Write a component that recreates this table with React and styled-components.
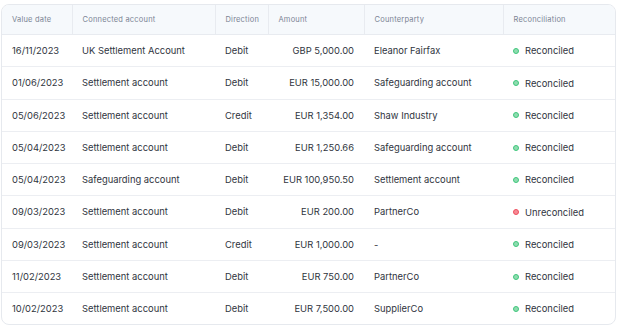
import React from 'react'
import styled, { createGlobalStyle } from 'styled-components'

const rows = [
  ['16/11/2023', 'UK Settlement Account', 'Debit', 'GBP 5,000.00', 'Eleanor Fairfax', true],
  ['01/06/2023', 'Settlement account', 'Debit', 'EUR 15,000.00', 'Safeguarding account', true],
  ['05/06/2023', 'Settlement account', 'Credit', 'EUR 1,354.00', 'Shaw Industry', true],
  ['05/04/2023', 'Settlement account', 'Debit', 'EUR 1,250.66', 'Safeguarding account', true],
  ['05/04/2023', 'Safeguarding account', 'Debit', 'EUR 100,950.50', 'Settlement account', true],
  ['09/03/2023', 'Settlement account', 'Debit', 'EUR 200.00', 'PartnerCo', false],
  ['09/03/2023', 'Settlement account', 'Credit', 'EUR 1,000.00', '-', true],
  ['11/02/2023', 'Settlement account', 'Debit', 'EUR 750.00', 'PartnerCo', true],
  ['10/02/2023', 'Settlement account', 'Debit', 'EUR 7,500.00', 'SupplierCo', true],
]

const columns = ['Value date', 'Connected account', 'Direction', 'Amount', 'Counterparty', 'Reconciliation']
const widths = [70, 143, 53, 96, 139, 114]

function App() {
  return (
    <>
      <GlobalStyle />
      <Page>
        <Card>
          <Table>
            <colgroup>
              {widths.map((w, i) => <col key={i} style={{ width: w }} />)}
            </colgroup>
            <thead>
              <tr>
                {columns.map((c) => <HeadCell key={c}>{c}</HeadCell>)}
              </tr>
            </thead>
            <tbody>
              {rows.map((r, i) => (
                <Row key={i}>
                  <Cell>{r[0]}</Cell>
                  <Cell>{r[1]}</Cell>
                  <Cell>{r[2]}</Cell>
                  <Cell $right>{r[3]}</Cell>
                  <Cell>{r[4]}</Cell>
                  <Cell>
                    <Status>
                      <Dot $ok={r[5]} />
                      {r[5] ? 'Reconciled' : 'Unreconciled'}
                    </Status>
                  </Cell>
                </Row>
              ))}
            </tbody>
          </Table>
        </Card>
      </Page>
    </>
  )
}

const GlobalStyle = createGlobalStyle`
    body {
        margin: 0;
        background: #fff;
        font-family: Inter, 'Liberation Sans', sans-serif;
    }
`

const Page = styled.div`
    padding: 4px 3px 0 1px;
`

const Card = styled.div`
    border: 1px solid #e6e9ee;
    border-radius: 8px;
    overflow: hidden;
    width: 615px;
    box-sizing: border-box;
`

const Table = styled.table`
    width: 100%;
    border-collapse: collapse;
    table-layout: fixed;
`

const HeadCell = styled.th`
    height: 29px;
    padding: 0 10px;
    background: #f6f9fc;
    color: #7b8494;
    font-size: 7.5px;
    font-weight: 400;
    text-align: left;
    border-bottom: 1px solid #e8ebf0;
    border-left: 1px solid #e8ebf0;
    letter-spacing: 0.2px;
    white-space: nowrap;

    &:first-child {
        border-left: none;
    }
`

const Row = styled.tr`
    &:not(:last-child) td {
        border-bottom: 1px solid #eceef2;
    }
`

const Cell = styled.td`
    height: 31.25px;
    padding: 0 10px;
    font-size: 9.4px;
    color: #30353e;
    text-align: ${(p) => (p.$right ? 'right' : 'left')};
    white-space: nowrap;
`

const Status = styled.span`
    display: inline-flex;
    align-items: center;
    gap: 6px;
`

const Dot = styled.span`
    width: 4px;
    height: 4px;
    border-radius: 50%;
    background: ${(p) => (p.$ok ? '#8fdcb0' : '#f58a95')};
    border: 1px solid ${(p) => (p.$ok ? '#3fc77c' : '#ef4f5e')};
`

export default App
